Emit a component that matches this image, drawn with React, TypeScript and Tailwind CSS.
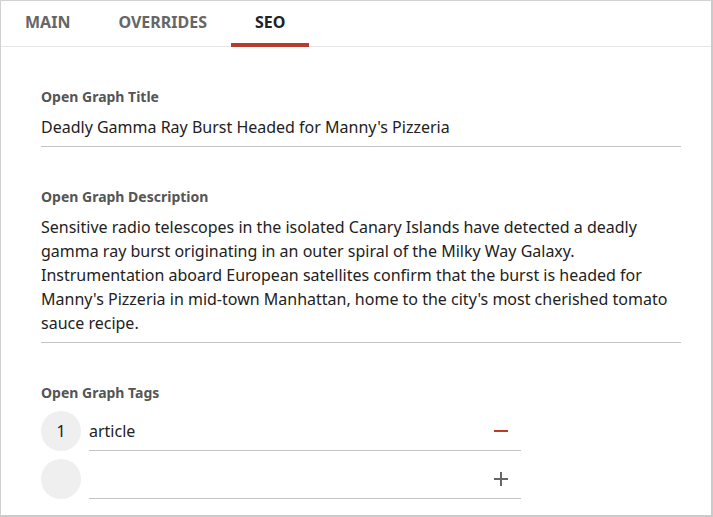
import React from 'react';

const tabs = ['Main', 'Overrides', 'SEO'];

function Field({ label, children }: { label: string; children: React.ReactNode }) {
  return (
    <div>
      <p className="text-[14px] leading-[18px] font-bold text-[#555]">{label}</p>
      <div className="mt-[9px] pb-[7px] border-b border-[#c4c4c4] text-[16px] leading-6 text-[#222]">
        {children}
      </div>
    </div>
  );
}

function TagRow({ index, value, removable }: { index?: number; value?: string; removable?: boolean }) {
  return (
    <div className="flex gap-2">
      <div className="w-10 h-10 rounded-full bg-[#efefef] flex items-center justify-center text-[16px] text-[#222]">
        {index}
      </div>
      <div className="w-[432px] h-10 border-b border-[#c4c4c4] flex items-center justify-between pr-[13px]">
        <span className="text-[16px] text-[#222]">{value}</span>
        {removable ? (
          <svg width="14" height="14" viewBox="0 0 14 14">
            <rect x="0" y="6" width="14" height="2" fill="#c0392b" />
          </svg>
        ) : (
          <svg width="14" height="14" viewBox="0 0 14 14">
            <rect x="0" y="6" width="14" height="2" fill="#666" />
            <rect x="6" y="0" width="2" height="14" fill="#666" />
          </svg>
        )}
      </div>
    </div>
  );
}

export default function App() {
  return (
    <div className="w-[713px] h-[517px] bg-white border-t border-l border-[#d2d2d2] border-r-2 border-b-2 border-r-[#cbcbcb] border-b-[#cbcbcb] font-['Noto_Sans',sans-serif] overflow-hidden">
      {/* Tabs */}
      <div className="flex h-[46px] border-b border-[#e6e6e6]">
        {tabs.map((t) => {
          const active = t === 'SEO';
          return (
            <div
              key={t}
              className={
                active
                  ? 'px-6 h-[46px] -mb-px flex items-center border-b-4 border-[#b83c2e] text-[16px] font-bold uppercase text-[#222]'
                  : 'px-6 h-[46px] -mb-px flex items-center border-b-4 border-transparent text-[16px] font-bold uppercase text-[#666]'
              }
            >
              {t}
            </div>
          );
        })}
      </div>

      {/* SEO form */}
      <div className="pl-10 pr-[30px] pt-[41px]">
        <Field label="Open Graph Title">Deadly Gamma Ray Burst Headed for Manny's Pizzeria</Field>
        <div className="mt-[41px]">
          <Field label="Open Graph Description">
            Sensitive radio telescopes in the isolated Canary Islands have detected a deadly gamma ray burst
            originating in an outer spiral of the Milky Way Galaxy. Instrumentation aboard European satellites
            confirm that the burst is headed for Manny's Pizzeria in mid-town Manhattan, home to the city's most
            cherished tomato sauce recipe.
          </Field>
        </div>
        <div className="mt-[41px]">
          <p className="text-[14px] leading-[18px] font-bold text-[#555]">Open Graph Tags</p>
          <div className="mt-[9px] space-y-2">
            <TagRow index={1} value="article" removable />
            <TagRow />
          </div>
        </div>
      </div>
    </div>
  );
}
